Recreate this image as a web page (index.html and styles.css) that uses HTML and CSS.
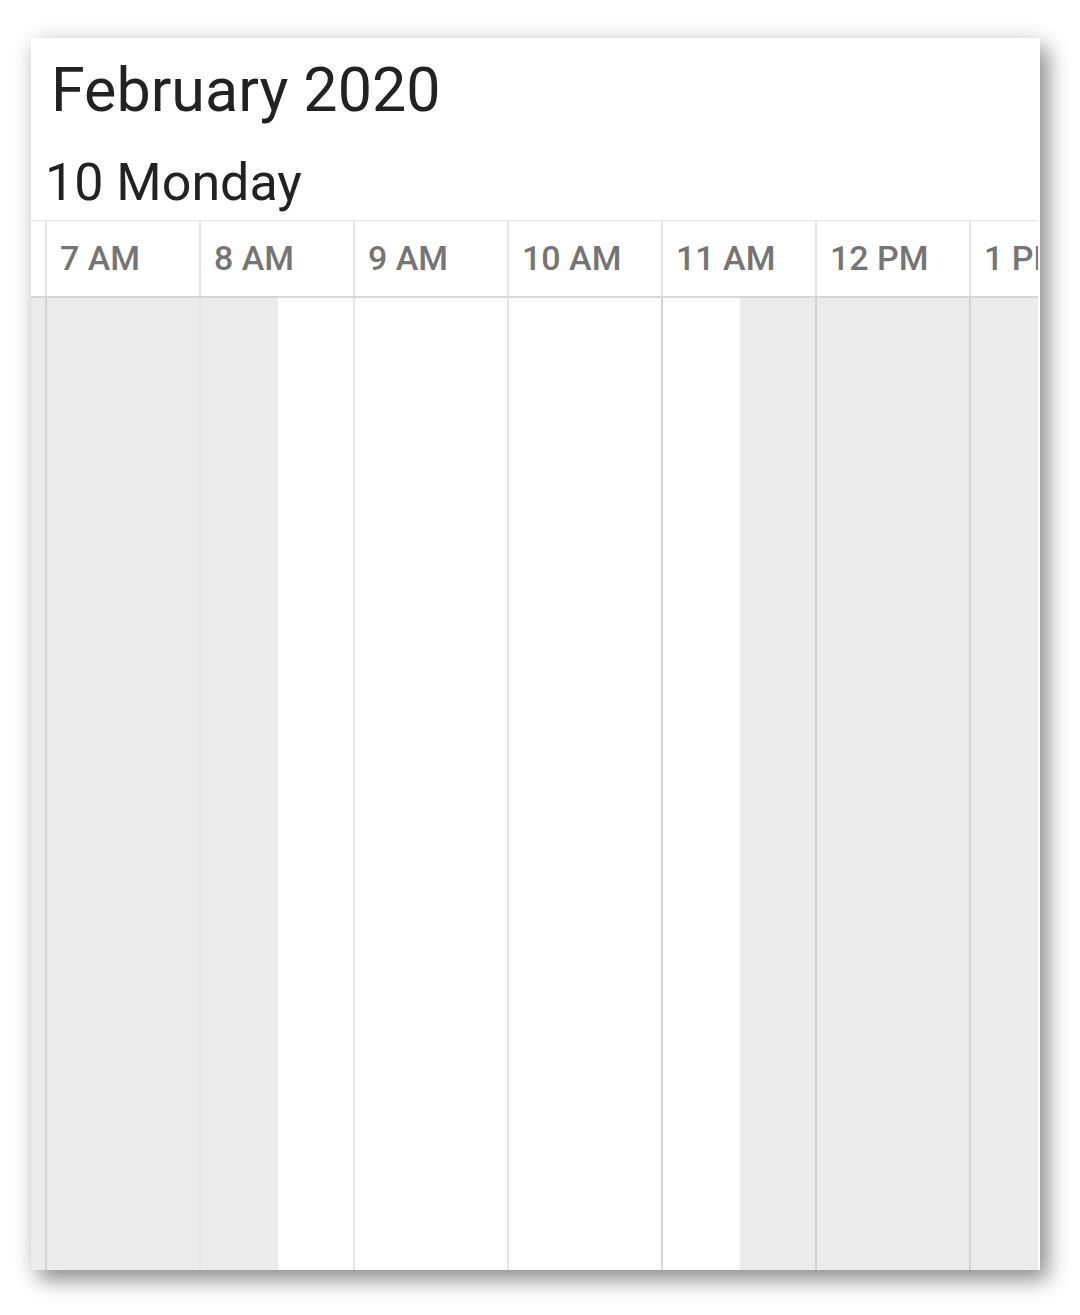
FILE: index.html
```html
<!DOCTYPE html>
<html>
<head>
<meta charset="utf-8">
<link rel="stylesheet" href="styles.css">
</head>
<body>
<div class="card">
  <div class="month">February 2020</div>
  <div class="day">10 Monday</div>
  <div class="timeline">
    <div class="row head">
      <div class="cell stub"></div>
      <div class="cell">7 AM</div>
      <div class="cell">8 AM</div>
      <div class="cell">9 AM</div>
      <div class="cell">10 AM</div>
      <div class="cell">11 AM</div>
      <div class="cell">12 PM</div>
      <div class="cell">1 PM</div>
    </div>
    <div class="row body">
      <div class="cell stub off"></div>
      <div class="cell off"></div>
      <div class="cell off-first"></div>
      <div class="cell"></div>
      <div class="cell"></div>
      <div class="cell off-last"></div>
      <div class="cell off"></div>
      <div class="cell off"></div>
    </div>
  </div>
</div>
</body>
</html>
```

FILE: styles.css
```css
html, body {
  margin: 0;
  padding: 0;
  background: #ffffff;
}
body {
  font-family: Roboto, "Noto Sans", sans-serif;
  width: 1080px;
  height: 1315px;
  overflow: hidden;
}
.card {
  margin: 38px 0 0 31px;
  width: 1009px;
  height: 1232px;
  background: #ffffff;
  box-shadow: 8px 10px 20px rgba(0, 0, 0, 0.42), 0 0 26px rgba(0, 0, 0, 0.08);
  display: flex;
  flex-direction: column;
}
.month {
  font-size: 61px;
  line-height: 1;
  color: #222222;
  padding: 22px 0 0 20px;
  height: 62px;
}
.day {
  font-size: 52px;
  line-height: 1;
  color: #222222;
  padding: 35px 0 0 14px;
  height: 62px;
  margin-bottom: 1px;
}
.timeline {
  width: 1007px;
  flex: 1;
  display: flex;
  flex-direction: column;
  overflow: hidden;
}
.row {
  display: flex;
}
.head {
  height: 78px;
  border-top: 1px solid #e3e3e3;
  border-bottom: 2px solid #d6d6d6;
  box-sizing: border-box;
}
.body {
  flex: 1;
}
.cell {
  flex: 0 0 154px;
  box-sizing: border-box;
  border-left: 2px solid rgba(0, 0, 0, 0.1);
}
.cell.stub {
  flex: 0 0 14px;
  border-left: none;
}
.head .cell {
  font-size: 34px;
  font-weight: 500;
  color: #757575;
  padding: 20px 0 0 13px;
  line-height: 1;
  white-space: nowrap;
  overflow: hidden;
  border-left: 2px solid #e6e6e6;
}
.head .cell.stub {
  border-left: none;
}
.off {
  background: #ebebeb;
}
.off-first {
  background: linear-gradient(to right, #ebebeb 0, #ebebeb 77px, #ffffff 77px);
}
.off-last {
  background: linear-gradient(to right, #ffffff 0, #ffffff 77px, #ebebeb 77px);
}
```
